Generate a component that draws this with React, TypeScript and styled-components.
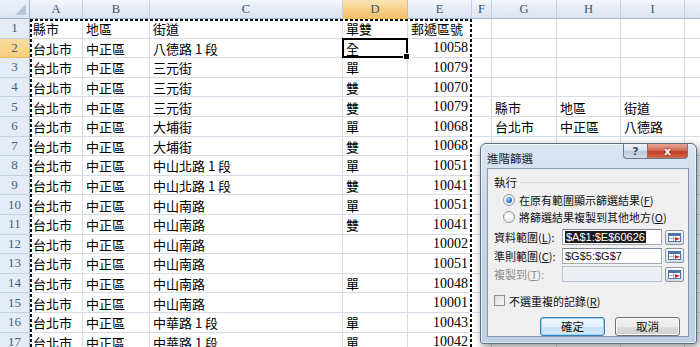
import styled, { createGlobalStyle, css } from 'styled-components';

const GlobalStyle = createGlobalStyle`
	html, body {
		margin: 0;
		padding: 0;
		background: #fff;
		overflow: hidden;
	}
	body {
		font-family: 'Noto Sans CJK TC', 'Noto Sans', sans-serif;
	}
`;

const Page = styled.div`
	position: relative;
	width: 700px;
	height: 347px;
	overflow: hidden;
	background: #fff;
`;

const Sheet = styled.div`
	position: relative;
	display: grid;
	grid-template-columns: 30px 53px 67px 193px 65px 64px 20px 65px 64px 64px 64px;
	grid-template-rows: 19px;
	grid-auto-rows: 19.6px;
	width: 749px;
`;

const headBase = css`
	font-family: 'Liberation Serif', 'DejaVu Serif', serif;
	font-size: 12.5px;
	color: #3e5270;
	display: flex;
	align-items: center;
	justify-content: center;
	box-sizing: border-box;
`;

const Corner = styled.div`
	${headBase};
	position: relative;
	background: linear-gradient(#eef3fa, #dbe5f2);
	border-right: 1px solid #9eb6ce;
	border-bottom: 1px solid #9eb6ce;
	&::after {
		content: '';
		position: absolute;
		right: 3px;
		bottom: 3px;
		border-style: solid;
		border-width: 0 0 11px 11px;
		border-color: transparent transparent #b5c6da transparent;
	}
`;

const ColHead = styled.div<{ $selected?: boolean }>`
	${headBase};
	background: ${(p) =>
		p.$selected
			? 'linear-gradient(#fbe3b4, #f6cf86 55%, #f3c26a)'
			: 'linear-gradient(#f3f6fb, #e4ebf5 55%, #dbe4f1)'};
	border-right: 1px solid ${(p) => (p.$selected ? '#f2b75b' : '#c3d1e3')};
	border-bottom: 1px solid ${(p) => (p.$selected ? '#f2b75b' : '#9eb6ce')};
	padding-top: 1px;
`;

const RowHead = styled.div<{ $selected?: boolean }>`
	${headBase};
	background: ${(p) => (p.$selected ? 'linear-gradient(#fbdd9f, #f6cd7f)' : '#e4ecf7')};
	border-right: 1px solid #9eb6ce;
	border-bottom: 1px solid ${(p) => (p.$selected ? '#f2b75b' : '#c3d1e3')};
	font-size: 13px;
	color: #4a5d79;
`;

const Cell = styled.div<{ $num?: boolean; $active?: boolean }>`
	position: relative;
	display: flex;
	align-items: center;
	justify-content: ${(p) => (p.$num ? 'flex-end' : 'flex-start')};
	box-sizing: border-box;
	padding: 1px 3px 0 3px;
	border-right: 1px solid #d5dce8;
	border-bottom: 1px solid #d5dce8;
	white-space: nowrap;
	color: #000;
	font-family: ${(p) =>
		p.$num ? "'Liberation Serif', 'Noto Sans CJK TC', serif" : "'Noto Sans CJK TC', sans-serif"};
	font-size: ${(p) => (p.$num ? '14px' : '13px')};
	${(p) =>
		p.$active &&
		css`
			&::after {
				content: '';
				position: absolute;
				left: -1px;
				top: -1px;
				right: -1px;
				bottom: -1px;
				border: 2px solid #000;
			}
			&::before {
				content: '';
				position: absolute;
				right: -3px;
				bottom: -3px;
				width: 5px;
				height: 5px;
				background: #000;
				border: 1px solid #fff;
				z-index: 2;
			}
		`}
`;

// copy range marching ants over A1:E
const Ants = styled.div`
	position: absolute;
	left: 30px;
	top: 19px;
	width: 442px;
	height: 340px;
	pointer-events: none;
	background:
		repeating-linear-gradient(90deg, #111 0 3px, #fff 3px 5px) top left / 100% 2px no-repeat,
		repeating-linear-gradient(180deg, #111 0 3px, #fff 3px 5px) top left / 2px 100% no-repeat,
		repeating-linear-gradient(180deg, #111 0 3px, #fff 3px 5px) top right / 2px 100% no-repeat;
`;

/* ---------- dialog ---------- */

const Dialog = styled.div`
	position: absolute;
	left: 480px;
	top: 143px;
	width: 217px;
	height: 201px;
	box-sizing: border-box;
	display: flex;
	flex-direction: column;
	padding: 0 7px 6px 6px;
	border: 1px solid #5e6e80;
	border-radius: 6px 6px 3px 3px;
	background: linear-gradient(#dbe6f3, #c8d8ea 30%, #bed0e5);
	box-shadow: 2px 3px 8px rgba(0, 0, 0, 0.45), inset 0 0 0 1px rgba(255, 255, 255, 0.6);
	font-family: 'Noto Sans CJK TC', sans-serif;
	font-size: 11px;
	color: #111;
	white-space: nowrap;
`;

const TitleBar = styled.div`
	height: 24px;
	display: flex;
	align-items: flex-start;
	justify-content: space-between;
`;

const Title = styled.div`
	padding-top: 6px;
	font-size: 11.5px;
	color: #1b2330;
`;

const Caption = styled.div`
	display: flex;
	margin-right: 1px;
`;

const CapButton = styled.div<{ $close?: boolean }>`
	width: ${(p) => (p.$close ? '41px' : '25px')};
	height: 15px;
	box-sizing: border-box;
	display: flex;
	align-items: center;
	justify-content: center;
	border: 1px solid #6a7a8e;
	border-top: none;
	border-radius: ${(p) => (p.$close ? '0 0 4px 0' : '0 0 0 4px')};
	margin-left: ${(p) => (p.$close ? '-1px' : '0')};
	background: ${(p) =>
		p.$close
			? 'linear-gradient(#e8a596, #d46f5a 45%, #c13b21 55%, #d66c4f)'
			: 'linear-gradient(#f1f5fa, #d6e1ee 45%, #bccbdd 55%, #cfdbe9)'};
	color: ${(p) => (p.$close ? '#fff' : '#3c4858')};
	font-family: 'DejaVu Sans', sans-serif;
	font-weight: bold;
	font-size: 11px;
	text-shadow: ${(p) => (p.$close ? '0 0 2px #5a1508' : '0 0 1px #fff')};
`;

const Panel = styled.div`
	flex: 1;
	display: flex;
	flex-direction: column;
	box-sizing: border-box;
	padding: 4px 8px 0 6px;
	background: #f0f0f0;
	border: 1px solid #8796a9;
`;

const GroupHead = styled.div`
	height: 18px;
	display: flex;
	align-items: center;
	gap: 3px;
	font-size: 11.5px;
	&::after {
		content: '';
		flex: 1;
		height: 0;
		border-top: 1px solid #d5dfe5;
		margin-top: 1px;
	}
`;

const Option = styled.div`
	height: 17px;
	display: flex;
	align-items: center;
	gap: 4px;
	padding-left: 9px;
`;

const Radio = styled.span<{ $checked?: boolean }>`
	position: relative;
	flex: none;
	width: 12px;
	height: 12px;
	box-sizing: border-box;
	border-radius: 50%;
	border: 1px solid #8a98a8;
	background: radial-gradient(circle at 40% 35%, #fff, #dde3ea);
	${(p) =>
		p.$checked &&
		css`
			&::after {
				content: '';
				position: absolute;
				left: 2px;
				top: 2px;
				width: 6px;
				height: 6px;
				border-radius: 50%;
				background: radial-gradient(circle at 35% 35%, #9fd6ff, #1f63c4 70%);
			}
		`}
`;

const Fields = styled.div`
	display: flex;
	flex-direction: column;
	margin-top: 3px;
`;

const Field = styled.div<{ $disabled?: boolean }>`
	height: 18.5px;
	display: flex;
	align-items: center;
	color: ${(p) => (p.$disabled ? '#8d8d8d' : '#111')};
`;

const FieldLabel = styled.span`
	width: 68px;
	flex: none;
`;

const Input = styled.div<{ $disabled?: boolean }>`
	width: 100px;
	height: 16px;
	flex: none;
	box-sizing: border-box;
	display: flex;
	align-items: center;
	padding-left: 2px;
	background: ${(p) => (p.$disabled ? '#ecf0f4' : '#fff')};
	border: 1px solid ${(p) => (p.$disabled ? '#b8c2cc' : '#a0aab6')};
	border-top-color: ${(p) => (p.$disabled ? '#b8c2cc' : '#7a8694')};
	font-family: 'Liberation Sans', sans-serif;
	font-size: 11px;
	color: #111;
	overflow: hidden;
`;

const Selected = styled.span`
	background: #1c1c1c;
	color: #fff;
	padding: 0 1px;
	line-height: 12px;
`;

const RangeButton = styled.div`
	width: 19px;
	height: 15px;
	flex: none;
	margin-left: 3px;
	box-sizing: border-box;
	display: flex;
	align-items: center;
	justify-content: center;
	border: 1px solid #8e99a6;
	border-radius: 2px;
	background: linear-gradient(#fbfbfb, #e6e9ed 50%, #d7dce2);
`;

const CheckRow = styled.div`
	height: 18px;
	margin-top: 8px;
	display: flex;
	align-items: center;
	gap: 4px;
`;

const Checkbox = styled.span`
	width: 11px;
	height: 11px;
	flex: none;
	box-sizing: border-box;
	border: 1px solid #8f8f8f;
	background: linear-gradient(135deg, #dcdcdc, #fbfbfb);
`;

const Buttons = styled.div`
	margin-top: 7px;
	display: flex;
	justify-content: flex-end;
	gap: 10px;
`;

const Button = styled.div<{ $default?: boolean }>`
	width: 65px;
	height: 19px;
	box-sizing: border-box;
	display: flex;
	align-items: center;
	justify-content: center;
	border: 1px solid ${(p) => (p.$default ? '#3c7fb1' : '#707070')};
	border-radius: 3px;
	background: ${(p) =>
		p.$default
			? 'linear-gradient(#f0f8fd, #e1f0fa 50%, #c4e3f6 51%, #d4ebf8)'
			: 'linear-gradient(#f2f2f2, #ebebeb 50%, #dddddd 51%, #cfcfcf)'};
	box-shadow: ${(p) => (p.$default ? 'inset 0 0 0 1px #97d4f5' : 'inset 0 0 0 1px #fcfcfc')};
	font-size: 11.5px;
	color: #111;
`;

function RangeIcon() {
	return (
		<svg width='13' height='9' viewBox='0 0 13 9'>
			<rect x='0.5' y='0.5' width='12' height='8' fill='#fff' stroke='#4b74a8' />
			<rect x='1' y='1' width='11' height='2' fill='#4b74a8' />
			<line x1='1' y1='5.5' x2='12' y2='5.5' stroke='#9fb4cf' />
			<line x1='5.5' y1='3' x2='5.5' y2='8' stroke='#9fb4cf' />
			<path d='M7 4 L11.5 6 L7 8 Z' fill='#d0281a' />
		</svg>
	);
}

type Row = {
	a?: string;
	b?: string;
	c?: string;
	d?: string;
	e?: string;
	g?: string;
	h?: string;
	i?: string;
};

const rows: Row[] = [
	{ a: '縣市', b: '地區', c: '街道', d: '單雙', e: '郵遞區號' },
	{ a: '台北市', b: '中正區', c: '八德路 1 段', d: '全', e: '10058' },
	{ a: '台北市', b: '中正區', c: '三元街', d: '單', e: '10079' },
	{ a: '台北市', b: '中正區', c: '三元街', d: '雙', e: '10070' },
	{ a: '台北市', b: '中正區', c: '三元街', d: '雙', e: '10079', g: '縣市', h: '地區', i: '街道' },
	{ a: '台北市', b: '中正區', c: '大埔街', d: '單', e: '10068', g: '台北市', h: '中正區', i: '八德路' },
	{ a: '台北市', b: '中正區', c: '大埔街', d: '雙', e: '10068' },
	{ a: '台北市', b: '中正區', c: '中山北路 1 段', d: '單', e: '10051' },
	{ a: '台北市', b: '中正區', c: '中山北路 1 段', d: '雙', e: '10041' },
	{ a: '台北市', b: '中正區', c: '中山南路', d: '單', e: '10051' },
	{ a: '台北市', b: '中正區', c: '中山南路', d: '雙', e: '10041' },
	{ a: '台北市', b: '中正區', c: '中山南路', e: '10002' },
	{ a: '台北市', b: '中正區', c: '中山南路', e: '10051' },
	{ a: '台北市', b: '中正區', c: '中山南路', d: '單', e: '10048' },
	{ a: '台北市', b: '中正區', c: '中山南路', e: '10001' },
	{ a: '台北市', b: '中正區', c: '中華路 1 段', d: '單', e: '10043' },
	{ a: '台北市', b: '中正區', c: '中華路 1 段', d: '單', e: '10042' },
];

const columns = ['A', 'B', 'C', 'D', 'E', 'F', 'G', 'H', 'I', ''];

function App() {
	return (
		<Page>
			<GlobalStyle />
			<Sheet>
				<Corner />
				{columns.map((c) => (
					<ColHead key={c || 'j'} $selected={c === 'D'}>
						{c}
					</ColHead>
				))}
				{rows.map((r, i) => (
					<>
						<RowHead key={`h${i}`} $selected={i === 1}>
							{i + 1}
						</RowHead>
						<Cell>{r.a}</Cell>
						<Cell>{r.b}</Cell>
						<Cell>{r.c}</Cell>
						<Cell $active={i === 1}>{r.d}</Cell>
						<Cell $num={i > 0}>{r.e}</Cell>
						<Cell />
						<Cell>{r.g}</Cell>
						<Cell>{r.h}</Cell>
						<Cell>{r.i}</Cell>
						<Cell />
					</>
				))}
				<Ants />
			</Sheet>

			<Dialog>
				<TitleBar>
					<Title>進階篩選</Title>
					<Caption>
						<CapButton>?</CapButton>
						<CapButton $close>x</CapButton>
					</Caption>
				</TitleBar>
				<Panel>
					<GroupHead>執行</GroupHead>
					<Option>
						<Radio $checked />
						<span>
							在原有範圍顯示篩選結果(<u>F</u>)
						</span>
					</Option>
					<Option>
						<Radio />
						<span>
							將篩選結果複製到其他地方(<u>O</u>)
						</span>
					</Option>
					<Fields>
						<Field>
							<FieldLabel>
								資料範圍(<u>L</u>):
							</FieldLabel>
							<Input>
								<Selected>$A$1:$E$60626</Selected>
							</Input>
							<RangeButton>
								<RangeIcon />
							</RangeButton>
						</Field>
						<Field>
							<FieldLabel>
								準則範圍(<u>C</u>):
							</FieldLabel>
							<Input>$G$5:$G$7</Input>
							<RangeButton>
								<RangeIcon />
							</RangeButton>
						</Field>
						<Field $disabled>
							<FieldLabel>
								複製到(<u>T</u>):
							</FieldLabel>
							<Input $disabled />
							<RangeButton>
								<RangeIcon />
							</RangeButton>
						</Field>
					</Fields>
					<CheckRow>
						<Checkbox />
						<span>
							不選重複的記錄(<u>R</u>)
						</span>
					</CheckRow>
					<Buttons>
						<Button $default>確定</Button>
						<Button>取消</Button>
					</Buttons>
				</Panel>
			</Dialog>
		</Page>
	);
}

export default App;
